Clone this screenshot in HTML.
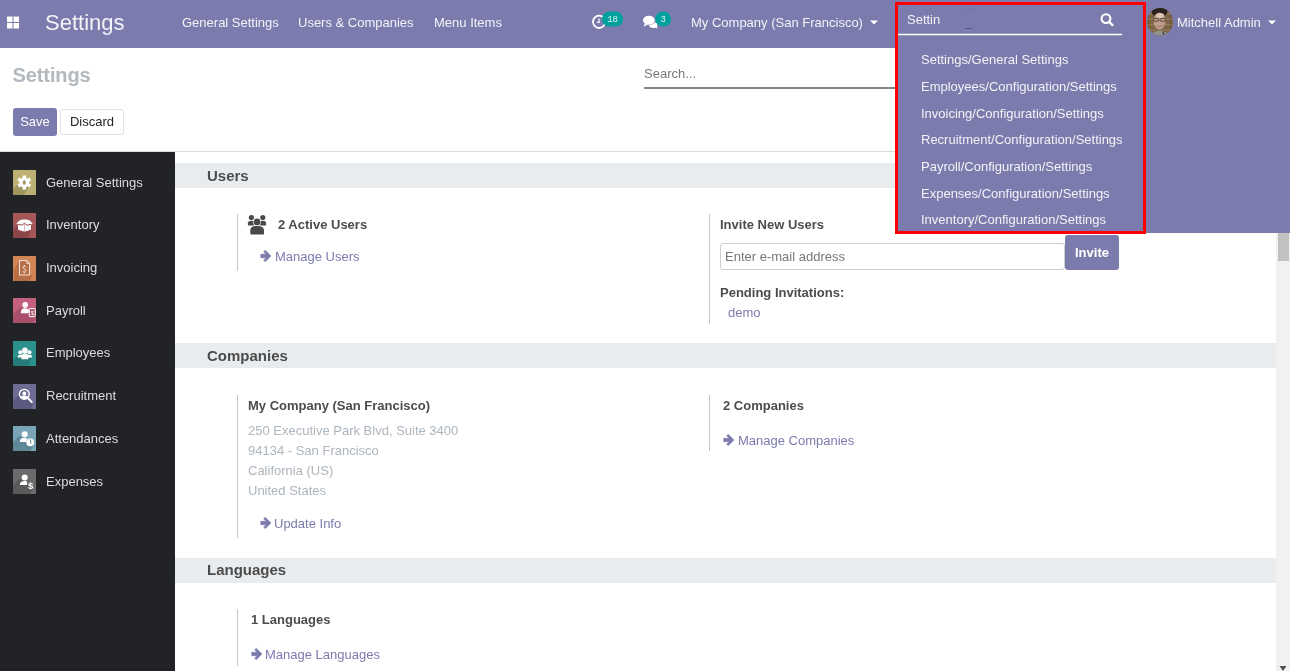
<!DOCTYPE html>
<html><head><meta charset="utf-8">
<style>
*{box-sizing:border-box;margin:0;padding:0}
html,body{width:1290px;height:671px;overflow:hidden;background:#fff;will-change:transform;font-family:"Liberation Sans",sans-serif;font-size:13px;color:#4c4c4c}
.a{position:absolute;white-space:nowrap;line-height:1}
svg{position:absolute;overflow:visible}
#nav{position:absolute;left:0;top:0;width:1290px;height:48px;background:#7c7bad}
.nt{color:#f2f2f7;font-size:13px}
#cp{position:absolute;left:0;top:48px;width:1290px;height:104px;background:#fff;border-bottom:1px solid #dcdcdc}
#side{position:absolute;left:0;top:152px;width:175px;height:519px;background:#212327}
.si{position:absolute;left:13px;width:23px;height:25px}
.st{position:absolute;left:46px;color:#dcdcdc;font-size:13px;line-height:1;white-space:nowrap}
.band{position:absolute;left:175px;width:1101px;height:25px;background:#e9ecef}
.bt{font-size:15px;font-weight:bold;color:#4c4c4c}
.vl{position:absolute;width:1px;background:#c6c6c6}
.b13{font-size:13px;font-weight:bold;color:#4c4c4c}
.lnk{color:#7c7bad;font-size:13px}
.gr{color:#adb5bd;font-size:13px}
#scroll{position:absolute;left:1276px;top:152px;width:14px;height:519px;background:#f1f1f1}
#dd{position:absolute;left:895px;top:0;width:395px;height:233px;background:#7c7bad}
#red{position:absolute;left:895px;top:2px;width:251px;height:232px;border:3px solid #ff0000}
.di{color:#f2f2f7;font-size:13px}
</style></head><body>

<div id="nav">
  <svg style="left:0;top:0" width="30" height="48">
    <rect x="7" y="16.5" width="5.5" height="5.5" fill="#fff"/>
    <rect x="13.5" y="16.5" width="5.5" height="5.5" fill="#fff"/>
    <rect x="7" y="23" width="5.5" height="5.5" fill="#fff"/>
    <rect x="13.5" y="23" width="5.5" height="5.5" fill="#fff"/>
  </svg>
  <div class="a nt" style="left:45px;top:12px;font-size:22px">Settings</div>
  <div class="a nt" style="left:182px;top:16px">General Settings</div>
  <div class="a nt" style="left:298px;top:16px">Users &amp; Companies</div>
  <div class="a nt" style="left:434px;top:16px">Menu Items</div>
  <!-- activity clock -->
  <svg style="left:585px;top:5px" width="45" height="30">
    <circle cx="14.1" cy="16.85" r="6.15" fill="none" stroke="#fff" stroke-width="1.8"/>
    <path d="M14.1 13.4 V17.3 H12" fill="none" stroke="#fff" stroke-width="1.2"/>
    <rect x="17" y="6.6" width="21.1" height="14.8" rx="7.4" fill="#00a09d"/>
    <text x="27.6" y="17" font-family="Liberation Mono" font-size="9" fill="#e0f4f3" text-anchor="middle">18</text>
  </svg>
  <!-- chat -->
  <svg style="left:638px;top:5px" width="40" height="30">
    <ellipse cx="15.3" cy="20" rx="4.1" ry="2.9" fill="#fff"/>
    <path d="M16.5 22 L19.3 23.8 L18.9 20" fill="#fff"/>
    <ellipse cx="10.9" cy="15.25" rx="6.5" ry="5.1" fill="#7c7bad"/>
    <ellipse cx="10.9" cy="15.25" rx="5.9" ry="4.55" fill="#fff"/>
    <path d="M6.8 18.2 L5.6 21.7 L9.8 19.4" fill="#fff"/>
    <rect x="17.2" y="6.6" width="15.9" height="14.8" rx="7.4" fill="#00a09d"/>
    <text x="25.2" y="17" font-family="Liberation Mono" font-size="9" fill="#e0f4f3" text-anchor="middle">3</text>
  </svg>
  <div class="a nt" style="left:691px;top:16px">My Company (San Francisco)</div>
  <svg style="left:868px;top:18px" width="12" height="8"><path d="M2 2.5 H10 L6 6.5 Z" fill="#fff"/></svg>
</div>

<div id="cp">
  <div class="a" style="left:12.6px;top:17px;font-size:20px;font-weight:bold;color:#b1b8be;letter-spacing:-0.12px">Settings</div>
  <div class="a" style="left:644px;top:19px;color:#7a7a7a">Search...</div>
  <div class="a" style="left:644px;top:39px;width:260px;height:1.5px;background:#80838a"></div>
  <div class="a" style="left:13px;top:60px;width:44px;height:28px;background:#7c7bad;border-radius:3px;color:#fff;line-height:28px;text-align:center">Save</div>
  <div class="a" style="left:60px;top:61px;width:64px;height:26px;border:1px solid #dee2e6;border-radius:3px;color:#212529;line-height:24px;text-align:center">Discard</div>
</div>

<div id="side">
  <!-- General settings gear -->
  <svg class="si" style="top:18.3px" viewBox="0 0 23 25">
    <rect width="23" height="25" fill="#bcb074"/>
    <path d="M5 14 L11.3 8 L17.5 14 L11 25 L0 25 L0 19 Z" fill="#a19660"/>
    <g transform="translate(11.3 12.5)" fill="#fff">
      <circle r="4.9"/>
      <rect x="-1.7" y="-7" width="3.4" height="14"/>
      <rect x="-1.7" y="-7" width="3.4" height="14" transform="rotate(60)"/>
      <rect x="-1.7" y="-7" width="3.4" height="14" transform="rotate(120)"/>
      <ellipse rx="1.5" ry="2.2" fill="#9d9360"/>
    </g>
  </svg>
  <div class="st" style="top:23.6px">General Settings</div>

  <!-- Inventory box -->
  <svg class="si" style="top:61px" viewBox="0 0 23 25">
    <rect width="23" height="25" fill="#a5575a"/>
    <path d="M4 13 L11.5 9 L19 13 L15 25 L0 25 L0 17 Z" fill="#8c4649"/>
    <path d="M6.8 7.2 C9 6.2 14 6.2 16.4 7.2 L19.6 10.6 L18 11.8 V16.6 C16 17.8 13.5 18.4 11.5 18.4 C9.5 18.4 7 17.8 5 16.6 V11.8 L3.4 10.6 Z" fill="#fff"/>
    <path d="M4.8 11.2 L8.8 12.2 L11.5 10.2 L14.2 12.2 L18.2 11.2" fill="none" stroke="#8c4649" stroke-width="1"/>
    <path d="M11.5 10.8 V18" stroke="#c79b9d" stroke-width=".7"/>
  </svg>
  <div class="st" style="top:66.4px">Inventory</div>

  <!-- Invoicing document -->
  <svg class="si" style="top:103.7px" viewBox="0 0 23 25">
    <rect width="23" height="25" fill="#d18454"/>
    <path d="M6.5 5 L1 13 V25 L16.5 25 L20 20 L16 18 V8 Z" fill="#b86f45"/>
    <path d="M6.5 4.6 H13.8 L16.6 7.4 V19 H6.5 Z" fill="#b56e47" stroke="#f4e6dc" stroke-width="1"/>
    <path d="M13.8 4.6 V7.4 H16.6" fill="none" stroke="#f4e6dc" stroke-width=".9"/>
    <path d="M12.9 11.3 C12.5 10.6 12 10.4 11.3 10.4 C10.4 10.4 9.9 10.9 9.9 11.6 C9.9 13.2 12.9 12.6 12.9 14.6 C12.9 15.5 12.2 16 11.3 16 C10.5 16 9.9 15.6 9.6 15 M11.3 9.1 V10.4 M11.3 16 V17.4" fill="none" stroke="#f4e6dc" stroke-width="1"/>
  </svg>
  <div class="st" style="top:109.1px">Invoicing</div>

  <!-- Payroll -->
  <svg class="si" style="top:146.3px" viewBox="0 0 23 25">
    <rect width="23" height="25" fill="#c5607f"/>
    <path d="M8 9 L0 16 V25 H20 L23 20 V16 Z" fill="#a94f6b"/>
    <circle cx="12.2" cy="6.9" r="2.8" fill="#fff"/>
    <path d="M7.8 15.2 C7.8 11.5 9.5 10.3 12.2 10.3 C14.5 10.3 15.8 11.2 16.2 13 L15.5 15.2 Z" fill="#fff"/>
    <rect x="16.3" y="10.6" width="5.9" height="8.1" rx=".8" fill="#a94f6b" stroke="#fff" stroke-width="1"/>
    <text x="19.3" y="17" font-family="Liberation Sans" font-size="5.5" fill="#fff" text-anchor="middle">$</text>
  </svg>
  <div class="st" style="top:151.8px">Payroll</div>

  <!-- Employees -->
  <svg class="si" style="top:189px" viewBox="0 0 23 25">
    <rect width="23" height="25" fill="#2b918d"/>
    <path d="M5 14 L0 19 V25 H15 L19 16 Z" fill="#267a77"/>
    <circle cx="11.9" cy="9.5" r="2.9" fill="#fff"/>
    <circle cx="7.3" cy="11.3" r="2" fill="#fff"/>
    <circle cx="16.5" cy="11.3" r="2" fill="#fff"/>
    <path d="M4.6 16.5 C4.6 14.3 5.6 13.8 7.3 13.8 C8.8 13.8 9.6 14.3 9.6 16.5 Z" fill="#fff"/>
    <path d="M14.2 16.5 C14.2 14.3 15 13.8 16.5 13.8 C18.2 13.8 19 14.3 19 16.5 Z" fill="#fff"/>
    <path d="M8.5 18.2 V15 C8.5 13 9.8 12.6 11.9 12.6 C14 12.6 15.4 13 15.4 15 V18.2 Z" fill="#fff"/>
  </svg>
  <div class="st" style="top:194.4px">Employees</div>

  <!-- Recruitment -->
  <svg class="si" style="top:231.7px" viewBox="0 0 23 25">
    <rect width="23" height="25" fill="#6e6c94"/>
    <path d="M6 11 L0 17 V25 H18 L20 20 L15 14 Z" fill="#5c5a80"/>
    <circle cx="11.3" cy="10.3" r="4.9" fill="none" stroke="#fff" stroke-width="1.4"/>
    <circle cx="11.3" cy="9.4" r="1.9" fill="#fff"/>
    <path d="M7.8 13.4 C8.5 11.8 9.8 11.6 11.3 11.6 C12.8 11.6 14.1 11.8 14.8 13.4 C13.8 14.6 12.6 15 11.3 15 C10 15 8.8 14.6 7.8 13.4 Z" fill="#fff"/>
    <path d="M14.6 13.8 L18.7 18" stroke="#fff" stroke-width="1.9" stroke-linecap="round"/>
  </svg>
  <div class="st" style="top:237.1px">Recruitment</div>

  <!-- Attendances -->
  <svg class="si" style="top:274.3px" viewBox="0 0 23 25">
    <rect width="23" height="25" fill="#78a6b8"/>
    <path d="M6 10 L0 16 V25 H17 L21 19 L15 14 Z" fill="#5f8898"/>
    <circle cx="11.7" cy="8.3" r="3" fill="#fff"/>
    <path d="M6.8 16 C6.8 13 8.3 11.8 11.5 11.8 C13 11.8 13.7 12.3 14 13 L13.2 16 Z" fill="#fff"/>
    <circle cx="17.2" cy="16.3" r="3.9" fill="#fff"/>
    <path d="M17.4 13.8 L17.9 17.4" stroke="#5f8898" stroke-width="1" stroke-linecap="round"/>
  </svg>
  <div class="st" style="top:279.8px">Attendances</div>

  <!-- Expenses -->
  <svg class="si" style="top:317px" viewBox="0 0 23 25">
    <rect width="23" height="25" fill="#6b6b6b"/>
    <path d="M6 10 L0 16 V25 H17 L20 19 L15 13 Z" fill="#5a5a5a"/>
    <circle cx="11.7" cy="8.5" r="3" fill="#fff"/>
    <path d="M6.9 16 C6.9 13 8.3 11.9 11.5 11.9 C13.2 11.9 14 12.4 14.3 13.3 L14 16 Z" fill="#fff"/>
    <text x="17.7" y="19.5" font-family="Liberation Sans" font-weight="bold" font-size="9.5" fill="#fff" text-anchor="middle">$</text>
  </svg>
  <div class="st" style="top:322.6px">Expenses</div>
</div>

<!-- main -->
<div class="band" style="top:163px"></div>
<div class="a bt" style="left:207px;top:167.5px">Users</div>
<div class="vl" style="left:237px;top:214px;height:57px"></div>
<svg style="left:247px;top:215px" width="22" height="20">
  <circle cx="4.4" cy="2.5" r="2.6" fill="#4a4a4a"/>
  <circle cx="15.8" cy="2.5" r="2.6" fill="#4a4a4a"/>
  <path d="M0.9 10.5 V8.3 C0.9 6.6 2.2 5.8 4.3 5.8 C6.4 5.8 7.6 6.6 7.6 8.3 V10.5 Z" fill="#4a4a4a"/>
  <path d="M12.4 10.5 V8.3 C12.4 6.6 13.6 5.8 15.7 5.8 C17.8 5.8 19.1 6.6 19.1 8.3 V10.5 Z" fill="#4a4a4a"/>
  <circle cx="10" cy="7" r="3.9" fill="#fff"/>
  <circle cx="10" cy="7" r="3.4" fill="#4a4a4a"/>
  <path d="M2.8 20 V15.5 C2.8 11.8 5.5 10.6 10 10.6 C14.5 10.6 17.5 11.8 17.5 15.5 V20 Z" fill="#fff"/>
  <path d="M3.3 18.4 V15.6 C3.3 12.3 5.8 11.1 10 11.1 C14.2 11.1 17 12.3 17 15.6 V18.4 C17 19.1 16.6 19.5 15.9 19.5 H4.4 C3.7 19.5 3.3 19.1 3.3 18.4 Z" fill="#4a4a4a"/>
</svg>
<div class="a b13" style="left:278px;top:218px">2 Active Users</div>
<svg class="arr" style="left:260px;top:250px" width="12" height="12"><path d="M0.8 4.3 H6.2 L3.7 1.8 L5.3 0.4 L10.9 6 L5.3 11.6 L3.7 10.2 L6.2 7.7 H0.8 Z" fill="#7c7bad" stroke="#7c7bad" stroke-width=".7" stroke-linejoin="round"/></svg>
<div class="a lnk" style="left:275px;top:250px">Manage Users</div>
<div class="vl" style="left:709px;top:214px;height:110px"></div>
<div class="a b13" style="left:720px;top:218px">Invite New Users</div>
<div class="a" style="left:720px;top:243px;width:345px;height:27px;border:1px solid #cfcfcf;border-radius:3px"></div>
<div class="a" style="left:725px;top:250px;color:#777">Enter e-mail address</div>
<div class="a" style="left:1065px;top:235px;width:54px;height:35px;background:#7c7bad;border-radius:3px"></div>
<div class="a" style="left:1075px;top:246px;color:#fff;font-weight:bold">Invite</div>
<div class="a b13" style="left:720px;top:286px">Pending Invitations:</div>
<div class="a lnk" style="left:728px;top:306px">demo</div>

<div class="band" style="top:343px"></div>
<div class="a bt" style="left:207px;top:348px">Companies</div>
<div class="vl" style="left:237px;top:395px;height:143px"></div>
<div class="a b13" style="left:248px;top:399px">My Company (San Francisco)</div>
<div class="a gr" style="left:248px;top:424px">250 Executive Park Blvd, Suite 3400</div>
<div class="a gr" style="left:248px;top:444px">94134 - San Francisco</div>
<div class="a gr" style="left:248px;top:464px">California (US)</div>
<div class="a gr" style="left:248px;top:484px">United States</div>
<svg style="left:260px;top:517px" width="12" height="12"><path d="M0.8 4.3 H6.2 L3.7 1.8 L5.3 0.4 L10.9 6 L5.3 11.6 L3.7 10.2 L6.2 7.7 H0.8 Z" fill="#7c7bad" stroke="#7c7bad" stroke-width=".7" stroke-linejoin="round"/></svg>
<div class="a lnk" style="left:274px;top:517px">Update Info</div>
<div class="vl" style="left:709px;top:395px;height:56px"></div>
<div class="a b13" style="left:723px;top:399px">2 Companies</div>
<svg style="left:723px;top:434px" width="12" height="12"><path d="M0.8 4.3 H6.2 L3.7 1.8 L5.3 0.4 L10.9 6 L5.3 11.6 L3.7 10.2 L6.2 7.7 H0.8 Z" fill="#7c7bad" stroke="#7c7bad" stroke-width=".7" stroke-linejoin="round"/></svg>
<div class="a lnk" style="left:738px;top:434px">Manage Companies</div>

<div class="band" style="top:558px"></div>
<div class="a bt" style="left:207px;top:562px">Languages</div>
<div class="vl" style="left:237px;top:609px;height:57px"></div>
<div class="a b13" style="left:251px;top:613px">1 Languages</div>
<svg style="left:251px;top:648px" width="12" height="12"><path d="M0.8 4.3 H6.2 L3.7 1.8 L5.3 0.4 L10.9 6 L5.3 11.6 L3.7 10.2 L6.2 7.7 H0.8 Z" fill="#7c7bad" stroke="#7c7bad" stroke-width=".7" stroke-linejoin="round"/></svg>
<div class="a lnk" style="left:265px;top:648px">Manage Languages</div>

<div id="scroll"></div>
<div class="a" style="left:1278px;top:233px;width:11px;height:28px;background:#c1c1c1"></div>
<svg style="left:1276px;top:660px" width="14" height="11"><path d="M3.5 6 H10.5 L7 11 Z" fill="#505050"/></svg>

<div id="dd"></div>
<div id="red"></div>
<div class="a di" style="left:907px;top:13px">Settin</div>
  <div class="a nt" style="left:1177px;top:16px">Mitchell Admin</div>
  <svg style="left:1266px;top:18px" width="12" height="8"><path d="M2 2.5 H10 L6 6.5 Z" fill="#fff"/></svg>
  <!-- avatar -->
  <svg style="left:1145px;top:6px" width="32" height="32">
    <defs><clipPath id="av"><ellipse cx="15.1" cy="15.8" rx="12.9" ry="13.8"/></clipPath></defs>
    <g clip-path="url(#av)">
      <rect x="0" y="0" width="32" height="32" fill="#7d6446"/>
      <rect x="0" y="7" width="32" height="1.5" fill="#a08860" opacity=".7"/>
      <rect x="0" y="12.5" width="32" height="1.5" fill="#a08860" opacity=".6"/>
      <rect x="0" y="18" width="32" height="1.5" fill="#a08860" opacity=".6"/>
      <rect x="0" y="23.5" width="32" height="1.5" fill="#a08860" opacity=".5"/>
      <rect x="3" y="0" width="1.2" height="32" fill="#5e4a35" opacity=".5"/>
      <rect x="25" y="0" width="1.2" height="32" fill="#5e4a35" opacity=".5"/>
      <ellipse cx="14.5" cy="5.8" rx="8" ry="5" fill="#2b221d"/>
      <ellipse cx="14.5" cy="15" rx="6" ry="8.6" fill="#c09c88"/>
      <ellipse cx="15" cy="9.5" rx="4.2" ry="2.6" fill="#d9c4b6"/>
      <rect x="8.6" y="12.4" width="5" height="2.8" rx="1" fill="none" stroke="#3a3232" stroke-width=".8"/>
      <rect x="15.2" y="12.4" width="5.2" height="2.8" rx="1" fill="none" stroke="#3a3232" stroke-width=".8"/>
      <path d="M11.5 19.5 C13 20.8 16 20.8 17.5 19.5" fill="none" stroke="#8e6e62" stroke-width=".8"/>
      <path d="M5 32 C7 26 11 25 15 25 C19 25 23 26 25 32 Z" fill="#8e968c"/>
      <path d="M18 25.5 L20 32" stroke="#3a4040" stroke-width="1.2"/>
    </g>
  </svg>

<div class="a" style="left:965px;top:28px;width:7px;height:1px;background:#4a4a6a;opacity:.7"></div>
<div class="a" style="left:964px;top:8px;width:9px;height:1px;background:#6a6a90;opacity:.35"></div>
<svg style="left:898px;top:30px" width="230" height="8"><line x1="0" y1="4.5" x2="224" y2="4.5" stroke="#fff" stroke-width="1.5"/></svg>
<svg style="left:1098px;top:11px" width="18" height="18">
  <circle cx="8" cy="7.6" r="4.4" fill="none" stroke="#fff" stroke-width="2.1"/>
  <path d="M11.2 10.8 L14.3 14" stroke="#fff" stroke-width="2.5" stroke-linecap="round"/>
</svg>
<div class="a di" style="left:921px;top:53px">Settings/General Settings</div>
<div class="a di" style="left:921px;top:80px">Employees/Configuration/Settings</div>
<div class="a di" style="left:921px;top:107px">Invoicing/Configuration/Settings</div>
<div class="a di" style="left:921px;top:133px">Recruitment/Configuration/Settings</div>
<div class="a di" style="left:921px;top:160px">Payroll/Configuration/Settings</div>
<div class="a di" style="left:921px;top:187px">Expenses/Configuration/Settings</div>
<div class="a di" style="left:921px;top:213px">Inventory/Configuration/Settings</div>

</body></html>
